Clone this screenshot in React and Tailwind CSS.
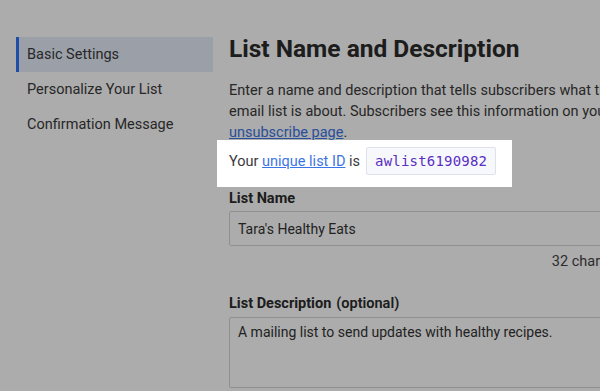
export default function App() {
  const font = { fontFamily: 'Roboto, "Liberation Sans", sans-serif' };
  return (
    <div className="w-[600px] h-[391px] bg-white flex" style={font}>
      <div className="w-[213px] shrink-0 pl-4 pt-[37px]">
        <div className="h-[35px] flex items-center bg-[#e6edfa] border-l-[3px] border-[#2c75f9] pl-2 text-[14.5px] text-[#3a3a3a]">
          Basic Settings
        </div>
        <div className="h-[35px] flex items-center pl-[11px] text-[14.5px] text-[#3a3a3a]">
          Personalize Your List
        </div>
        <div className="h-[35px] flex items-center pl-[11px] text-[14.5px] text-[#3a3a3a]">
          Confirmation Message
        </div>
      </div>
      <div className="ml-4 w-[371px] shrink-0 pt-[34px]">
        <h1 className="text-[24.5px] leading-[30px] font-bold text-[#2b2b2b] whitespace-nowrap">
          List Name and Description
        </h1>
        <div className="w-[371px] overflow-hidden">
          <p className="mt-4 w-[410px] text-[14.5px] leading-[21px] text-[#3a3a3a]">
            Enter a name and description that tells subscribers what their
            email list is about. Subscribers see this information on your{" "}
            <span className="text-[#3b75e5] underline">unsubscribe page</span>.
          </p>
        </div>
        <div className="mt-[-3px] -ml-3 inline-flex items-center pl-3 pr-4 pt-[7px] pb-[12px] bg-white relative z-10 shadow-[0_0_0_9999px_rgba(0,0,0,0.325)] text-[14.5px] text-[#3a3a3a] whitespace-nowrap">
          <span className="pt-[2px]">
            Your <span className="text-[#3b75e5] underline">unique list ID</span> is
          </span>
          <span
            className="ml-[6px] h-[28px] px-2 flex items-center bg-[#f6f8fc] border border-[#dde2ec] rounded-[2px] text-[#5a2fc2] text-[14px]"
            style={{ fontFamily: '"DejaVu Sans Mono", "Liberation Mono", monospace', letterSpacing: "0.2px" }}
          >
            awlist6190982
          </span>
        </div>
        <div className="overflow-hidden w-[371px]">
          <div className="w-[480px]">
            <div className="mt-[2px] text-[14.5px] leading-[20px] font-bold text-[#2b2b2b]">List Name</div>
            <div className="mt-[2px] h-[35px] border border-[#d4d4d4] rounded-[2px] flex items-center px-2 pt-[1px] text-[14px] text-[#333]">
              Tara's Healthy Eats
            </div>
            <div className="mt-[6px] flex justify-end text-[14.5px] leading-[20px] text-[#444] pr-[1px]">
              32 characters remaining
            </div>
            <div className="mt-[22px] text-[14.5px] leading-[20px] text-[#2b2b2b]">
              <span className="font-bold">List Description</span>
              <span className="ml-[5px] font-semibold">(optional)</span>
            </div>
            <div className="mt-[3px] h-[71px] border border-[#d4d4d4] rounded-[2px] px-2 pt-1 text-[14px] leading-[20px] text-[#333]">
              A mailing list to send updates with healthy recipes.
            </div>
          </div>
        </div>
      </div>
    </div>
  );
}
